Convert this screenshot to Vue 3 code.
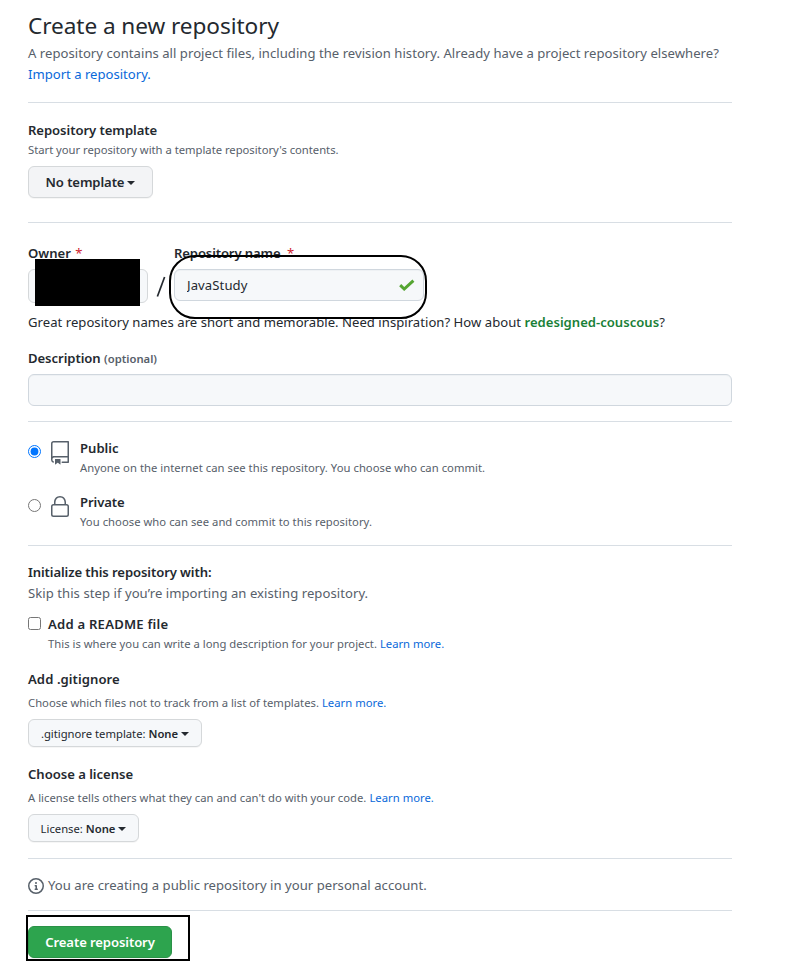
<script setup>
import { ref } from 'vue'

const name = ref('JavaStudy')
const description = ref('')
const visibility = ref('public')
const readme = ref(false)
</script>

<template>
  <main class="page">
    <h1><span class="t-h1">Create a new repository</span></h1>
    <p class="lead">
      <span class="t-lead">A repository contains all project files, including the revision history. Already have a project repository elsewhere?</span><br />
      <a>Import a repository.</a>
    </p>
    <hr class="hr-lead" />

    <section class="template">
      <h2><span class="t-tpl">Repository template</span></h2>
      <p class="note"><span class="t-start">Start your repository with a template repository's contents.</span></p>
      <button class="btn btn-template"><b class="t-btn">No template</b><i class="caret"></i></button>
    </section>
    <hr />

    <section class="naming">
      <div class="owner">
        <h2><span>Owner</span> <em class="star-owner">*</em></h2>
        <div class="owner-box"><div class="redaction"></div></div>
      </div>
      <svg class="slash" width="10" height="24" viewBox="0 0 10 24"><path d="M8.6 2 1.4 21.5" /></svg>
      <div class="repo">
        <h2><span class="t-rname">Repository name</span> <em class="star-name">*</em></h2>
        <div class="field">
          <input v-model="name" class="input" type="text" />
          <svg class="check" width="16" height="12" viewBox="0 0 16 12"><path d="M1.2 6.2 5.2 10 14.4 1.6" /></svg>
          <div class="ring"></div>
        </div>
      </div>
    </section>
    <p class="hint"><span class="t-hint">Great repository names are short and memorable. Need inspiration? How about </span><b class="suggestion">redesigned-couscous</b>?</p>

    <h2 class="desc"><span class="t-desc">Description</span> <small>(optional)</small></h2>
    <input v-model="description" class="input input-desc" type="text" />
    <hr class="hr-desc" />

    <label class="choice">
      <input v-model="visibility" type="radio" value="public" />
      <svg width="24" height="24" viewBox="0 0 24 24"><path fill-rule="evenodd" d="M3 2.75A2.75 2.75 0 015.75 0h14.5a.75.75 0 01.75.75v20.5a.75.75 0 01-.75.75h-6a.75.75 0 010-1.5h5.25v-4H6A1.5 1.5 0 004.5 18v.75c0 .716.43 1.334 1.05 1.605a.75.75 0 01-.6 1.374A3.25 3.25 0 013 18.75v-16zM19.5 1.5V15H6c-.546 0-1.059.146-1.5.401V2.75c0-.69.56-1.25 1.25-1.25H19.5z" /><path d="M7 18.25a.25.25 0 01.25-.25h5a.25.25 0 01.25.25v5.01a.25.25 0 01-.397.201l-2.206-1.604a.25.25 0 00-.294 0L7.397 23.46a.25.25 0 01-.397-.2v-5.01z" /></svg>
      <span class="choice-text">
        <b>Public</b>
        <small class="t-anyone">Anyone on the internet can see this repository. You choose who can commit.</small>
      </span>
    </label>
    <label class="choice choice-private">
      <input v-model="visibility" type="radio" value="private" />
      <svg width="24" height="24" viewBox="0 0 24 24"><path fill-rule="evenodd" d="M6 9V7.25C6 3.845 8.503 1 12 1s6 2.845 6 6.25V9h.5a2.5 2.5 0 012.5 2.5v8a2.5 2.5 0 01-2.5 2.5h-13A2.5 2.5 0 013 19.5v-8A2.5 2.5 0 015.5 9H6zm1.5-1.75C7.5 4.58 9.422 2.5 12 2.5c2.578 0 4.5 2.08 4.5 4.75V9h-9V7.25zm-3 4.25a1 1 0 011-1h13a1 1 0 011 1v8a1 1 0 01-1 1h-13a1 1 0 01-1-1v-8z" /></svg>
      <span class="choice-text">
        <b class="t-private">Private</b>
        <small class="t-you">You choose who can see and commit to this repository.</small>
      </span>
    </label>
    <hr class="hr-choice" />

    <section class="init">
      <h2><span class="t-init">Initialize this repository with:</span></h2>
      <p class="skip"><span class="t-skip">Skip this step if you’re importing an existing repository.</span></p>
      <label class="readme">
        <input v-model="readme" type="checkbox" />
        <span class="choice-text">
          <b class="t-readme">Add a README file</b>
          <small class="t-long">This is where you can write a long description for your project. <a>Learn more.</a></small>
        </span>
      </label>
    </section>

    <section class="option">
      <h2><span class="t-ign">Add .gitignore</span></h2>
      <p class="note"><span class="t-which">Choose which files not to track from a list of templates. <a>Learn more.</a></span></p>
      <button class="btn btn-sm btn-ignore"><span>.gitignore template: <b>None</b></span><i class="caret"></i></button>
    </section>

    <section class="option">
      <h2><span class="t-lic">Choose a license</span></h2>
      <p class="note"><span class="t-tells">A license tells others what they can and can't do with your code. <a>Learn more.</a></span></p>
      <button class="btn btn-sm btn-license"><span>License: <b>None</b></span><i class="caret"></i></button>
    </section>
    <hr class="hr-license" />

    <p class="info">
      <svg width="16" height="16" viewBox="0 0 16 16"><path fill-rule="evenodd" d="M8 1.5a6.5 6.5 0 100 13 6.5 6.5 0 000-13zM0 8a8 8 0 1116 0A8 8 0 010 8zm6.5-.25A.75.75 0 017.25 7h1a.75.75 0 01.75.75v2.75h.25a.75.75 0 010 1.5h-2a.75.75 0 010-1.5h.25v-2h-.25a.75.75 0 01-.75-.75zM8 6a1 1 0 100-2 1 1 0 000 2z" /></svg>
      <span class="t-info">You are creating a public repository in your personal account.</span>
    </p>
    <hr class="hr-info" />

    <div class="submit">
      <button class="btn btn-primary"><b class="t-create">Create repository</b></button>
      <div class="frame"></div>
    </div>
  </main>
</template>

<style>
body {
  background: #fff;
}
</style>

<style scoped>
.page {
  box-sizing: border-box;
  width: 732px;
  height: 966px;
  padding: 8px 0 0 28px;
  overflow: hidden;
  font-family: "Noto Sans", "Open Sans", sans-serif;
  font-size: 13.1px;
  line-height: 21px;
  color: #24292f;
  white-space: nowrap;
}
h1, h2, p, hr {
  margin: 0;
}
h1 {
  height: 35px;
  font-size: 22.6px;
  font-weight: 400;
  line-height: 36px;
}
h2 {
  height: 21px;
  font-size: 13.1px;
  font-weight: 600;
}
h2 em {
  color: #cf222e;
  font-style: normal;
  font-weight: 400;
}
.star-owner {
  margin-left: 1px;
}
.star-name {
  margin-left: 3px;
}
b {
  font-weight: 600;
}
a {
  color: #0969da;
}
.lead, .skip, .info {
  color: #57606a;
}
.note, small {
  font-size: 11.25px;
  line-height: 18px;
  color: #57606a;
}
hr {
  height: 1px;
  border: 0;
  background: #d8dee4;
}
.hr-lead {
  margin: 17px 0 17px;
}
.template {
  padding-bottom: 24px;
}
.btn {
  display: flex;
  align-items: center;
  justify-content: center;
  box-sizing: border-box;
  padding: 0;
  border: 1px solid #d5d8da;
  border-radius: 6px;
  background: #f6f8fa;
  box-shadow: 0 1px 0 rgba(27, 31, 36, 0.04);
  color: #24292f;
  font: inherit;
}
.caret {
  margin: 1px 0 0 3px;
  border: 4px solid transparent;
  border-top-color: currentColor;
  border-bottom: 0;
}
.btn-template {
  width: 125px;
  height: 32px;
  margin-top: 7px;
  background: #f3f4f6;
}
.naming {
  display: flex;
  margin-top: 20px;
  height: 69px;
}
.owner {
  width: 120px;
}
.owner-box, .field {
  position: relative;
  margin-top: 5px;
}
.owner-box {
  box-sizing: border-box;
  height: 34px;
  border: 1px solid #d5d8da;
  border-radius: 6px;
  background: #f6f8fa;
}
.redaction {
  position: absolute;
  left: 6px;
  top: -11px;
  width: 105px;
  height: 47px;
  background: #000;
}
.slash {
  margin: 32px 8px 0;
  fill: none;
  stroke: #24292f;
  stroke-width: 1.7;
}
.repo {
  width: 250px;
}
.input {
  display: block;
  box-sizing: border-box;
  width: 100%;
  height: 32px;
  padding: 0 12px;
  border: 1px solid #d0d7de;
  border-radius: 6px;
  outline: 0;
  background: #f6f8fa;
  box-shadow: inset 0 1px 0 rgba(208, 215, 222, 0.2);
  color: #24292f;
  font: inherit;
  letter-spacing: 0.1px;
}
.check {
  position: absolute;
  right: 9px;
  top: 10px;
  fill: none;
  stroke: #55a532;
  stroke-width: 3;
}
.ring {
  position: absolute;
  left: -5px;
  top: -14px;
  box-sizing: border-box;
  width: 258px;
  height: 64px;
  border: 2px solid #000;
  border-radius: 26px;
}
.suggestion {
  color: #1a7f37;
}
.desc {
  margin: 15px 0 5px;
}
.hr-desc {
  margin: 15px 0 16px;
}
.choice {
  display: flex;
  height: 39px;
}
.choice input {
  width: 13px;
  height: 13px;
  margin: 7px 7px 0 0;
}
.choice svg {
  margin: 3px 8px 0 0;
  fill: #57606a;
}
.choice-text {
  display: flex;
  flex-direction: column;
}
.choice-text small {
  display: block;
}
.choice-private {
  margin-top: 15px;
}
.hr-choice {
  margin: 14px 0 16px;
}
.readme {
  display: flex;
  margin-top: 10px;
}
.readme input {
  width: 13px;
  height: 13px;
  margin: 3px 7px 0 0;
}
.option {
  margin-top: 16px;
}
.option + .option {
  margin-top: 17px;
}
.option .note {
  margin-top: 4px;
}
.btn-sm {
  height: 28px;
  margin-top: 7px;
  font-size: 11.25px;
}
.btn-ignore {
  width: 174px;
}
.btn-license {
  width: 111px;
}
.hr-license {
  margin: 16px 0;
}
.info {
  display: flex;
}
.info svg {
  margin: 3px 4px 0 0;
  fill: #57606a;
}
.hr-info {
  margin: 14px 0 15px;
}
.submit {
  position: relative;
}
.btn-primary {
  width: 144px;
  height: 32px;
  border-color: #2a9147;
  background: #2da44e;
  color: #fff;
}
.frame {
  position: absolute;
  left: -2px;
  top: -11px;
  box-sizing: border-box;
  width: 164px;
  height: 46px;
  border: 2px solid #000;
}
.t-h1, .t-tpl, .t-desc { letter-spacing: -0.06px; }
.t-lead, .t-hint, .t-anyone, .t-tells, .t-info { letter-spacing: 0.03px; }
.t-start { letter-spacing: -0.016px; }
.t-btn, .t-private, .t-init, .t-create { letter-spacing: -0.1px; }
.t-rname { letter-spacing: -0.13px; }
.t-you { letter-spacing: 0.035px; }
.t-skip { letter-spacing: 0.05px; }
.t-readme { letter-spacing: 0.22px; }
.t-long { letter-spacing: 0.01px; }
.t-which { letter-spacing: 0.022px; }
.t-ign { letter-spacing: 0.07px; }
.t-lic { letter-spacing: -0.03px; }
</style>
